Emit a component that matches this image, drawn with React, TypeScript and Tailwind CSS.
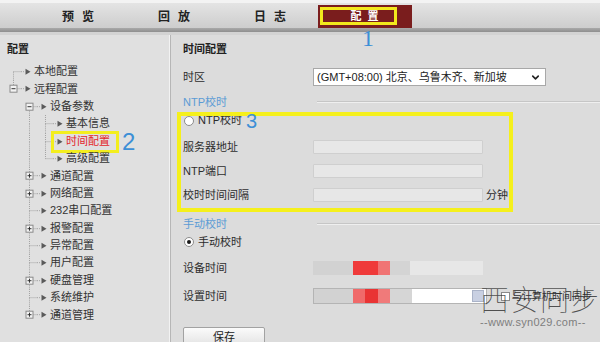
import React from "react";
import { ChevronDown } from "lucide-react";

type Kind =
  | "blank"
  | "pipe"
  | "tee"
  | "end"
  | "top"
  | "plus"
  | "plusEnd"
  | "minusTop"
  | "minusEnd";

interface TreeItem {
  label: string;
  cells: Kind[];
  active?: boolean;
}

const treeItems: TreeItem[] = [
  { label: "本地配置", cells: ["top"] },
  { label: "远程配置", cells: ["minusEnd"] },
  { label: "设备参数", cells: ["blank", "minusTop"] },
  { label: "基本信息", cells: ["blank", "pipe", "tee"] },
  { label: "时间配置", cells: ["blank", "pipe", "tee"], active: true },
  { label: "高级配置", cells: ["blank", "pipe", "end"] },
  { label: "通道配置", cells: ["blank", "plus"] },
  { label: "网络配置", cells: ["blank", "plus"] },
  { label: "232串口配置", cells: ["blank", "tee"] },
  { label: "报警配置", cells: ["blank", "plus"] },
  { label: "异常配置", cells: ["blank", "tee"] },
  { label: "用户配置", cells: ["blank", "tee"] },
  { label: "硬盘管理", cells: ["blank", "plus"] },
  { label: "系统维护", cells: ["blank", "tee"] },
  { label: "通道管理", cells: ["blank", "plusEnd"] },
];

const tabs = [
  { label: ["预", "览"] },
  { label: ["回", "放"] },
  { label: ["日", "志"] },
  { label: ["配", "置"], active: true },
];

// tree connector drawing for one indent level (16 x 17.4)
const TreeCell = ({ kind }: { kind: Kind }) => {
  const up = ["pipe", "tee", "end", "plus", "plusEnd", "minusEnd"].includes(kind);
  const down = ["pipe", "tee", "top", "plus", "minusTop"].includes(kind);
  const right = kind !== "blank" && kind !== "pipe";
  const box = ["plus", "plusEnd", "minusTop", "minusEnd"].includes(kind);
  const plus = kind === "plus" || kind === "plusEnd";
  return (
    <svg width="16" height="17.4" viewBox="0 0 16 17.4" className="shrink-0">
      <g stroke="#a3a3a3" strokeWidth="1" strokeDasharray="1 1">
        {up && <line x1="8.5" y1="0" x2="8.5" y2="8.7" />}
        {down && <line x1="8.5" y1="8.7" x2="8.5" y2="17.4" />}
        {right && <line x1="8.5" y1="8.7" x2="16" y2="8.7" />}
      </g>
      {box && (
        <g>
          <rect x="5" y="5.2" width="7" height="7" fill="#f3f3f3" stroke="#8a8a8a" strokeWidth="1" />
          <line x1="6.5" y1="8.7" x2="10.5" y2="8.7" stroke="#333" strokeWidth="1" />
          {plus && <line x1="8.5" y1="6.7" x2="8.5" y2="10.7" stroke="#333" strokeWidth="1" />}
        </g>
      )}
    </svg>
  );
};

const Arrow = () => (
  <svg width="13" height="17.4" viewBox="0 0 13 17.4" className="shrink-0">
    <line x1="0" y1="8.7" x2="4" y2="8.7" stroke="#a3a3a3" strokeDasharray="1 1" />
    <polygon points="4.5,5.7 9.5,8.7 4.5,11.7" fill="#5a5a5a" />
  </svg>
);

const Radio = ({ checked }: { checked?: boolean }) => (
  <span className="w-[10px] h-[10px] rounded-full border border-[#8c8c8c] bg-white flex items-center justify-center shrink-0">
    {checked && <span className="w-[4px] h-[4px] rounded-full bg-[#1a1a1a]" />}
  </span>
);

const SectionTitle = ({ title }: { title: string }) => (
  <div className="h-[22px] flex items-center">
    <span className="w-[130px] text-[11px] text-[#5b9bd5]">{title}</span>
    <span className="flex-1 ml-[4px] h-[2px] border-t border-[#c6c6c6] bg-[#efefef]" />
  </div>
);

const FieldRow = ({ label, children }: { label: string; children?: React.ReactNode }) => (
  <div className="h-[24px] flex items-center">
    <span className="w-[130px] text-[11px] text-[#2e2e2e]">{label}</span>
    {children}
  </div>
);

const GrayInput = () => (
  <span className="w-[170px] h-[14px] bg-[#e7e7e7] border border-[#cfcfcf] rounded-[1px]" />
);

export default function App() {
  return (
    <div className="w-[600px] h-[342px] overflow-hidden relative bg-[#dcdcdc] text-[#2b2b2b] font-['Liberation_Sans','Noto_Sans_CJK_SC',sans-serif]">
      {/* Top nav */}
      <div className="h-[3px] bg-[#f3f3f3]" />
      <div className="h-[25px] flex items-end pl-[30px] bg-gradient-to-b from-[#e4e4e4] to-[#cdcdcd]">
        {tabs.map((t) =>
          t.active ? (
            <div key="active" className="w-[94px] h-[23px] bg-[#7a1d1d] pl-[2px] pt-[2px]">
              <div className="w-[77px] h-[18px] border-[3px] border-[#f3e81c] flex items-center justify-center gap-[6px] pl-[12px] text-[11px] font-bold text-white">
                <span>{t.label[0]}</span>
                <span>{t.label[1]}</span>
              </div>
            </div>
          ) : (
            <div
              key={t.label.join("")}
              className="w-[96px] h-[23px] flex items-center justify-center gap-[8px] text-[12px] font-bold text-[#222]"
            >
              <span>{t.label[0]}</span>
              <span>{t.label[1]}</span>
            </div>
          )
        )}
      </div>
      <div className="h-[4px] bg-gradient-to-b from-[#a9a9a9] to-[#8f8f8f]" />
      <div className="h-[3px] bg-[#d3d3d3]" />

      <div className="flex h-[307px]">
        {/* Left tree */}
        <aside className="w-[170px] bg-[#e0e0e0] border-r border-[#f2f2f2]">
          <div className="h-[28px] flex items-center pl-[7px] text-[11px] font-bold text-[#222]">
            配置
          </div>
          <div className="pl-[5px]">
            {treeItems.map((item) => (
              <div key={item.label} className="relative h-[17.4px] flex items-center">
                {item.cells.map((c, i) => (
                  <TreeCell key={i} kind={c} />
                ))}
                <Arrow />
                <span
                  className={`text-[11px] leading-none whitespace-nowrap ${
                    item.active ? "text-[#e3262b]" : "text-[#333]"
                  }`}
                >
                  {item.label}
                </span>
                {item.active && (
                  <>
                    <span className="absolute left-[46px] top-[-2px] w-[68px] h-[22px] border-[3px] border-[#f3ee1e]" />
                    <span className="absolute left-[117px] top-[-3px] text-[24px] leading-none text-[#3d8fd6] font-['Liberation_Sans',sans-serif]">
                      2
                    </span>
                  </>
                )}
              </div>
            ))}
          </div>
        </aside>

        {/* Main */}
        <main className="flex-1 border-l border-[#b6b6b6] pl-[12px]">
          <div className="h-[28px] flex items-center text-[11px] font-bold text-[#222]">时间配置</div>

          <div className="h-[28px] flex items-center">
            <span className="w-[130px] text-[11px]">时区</span>
            <div className="w-[233px] h-[18px] bg-white border border-[#a8a8a8] flex items-center justify-between pl-[3px] pr-[4px]">
              <span className="text-[11px] text-[#222] whitespace-nowrap">(GMT+08:00) 北京、乌鲁木齐、新加坡</span>
              <ChevronDown size={11} strokeWidth={3.5} className="text-[#222]" />
            </div>
          </div>

          <SectionTitle title="NTP校时" />

          <div className="h-[15px] flex items-center pl-[1px] gap-[4px]">
            <Radio />
            <span className="text-[11px]">NTP校时</span>
          </div>

          <div className="mt-[7px]">
            <FieldRow label="服务器地址">
              <GrayInput />
            </FieldRow>
            <FieldRow label="NTP端口">
              <GrayInput />
            </FieldRow>
            <FieldRow label="校时时间间隔">
              <GrayInput />
              <span className="ml-[3px] text-[11px]">分钟</span>
            </FieldRow>
          </div>

          <div className="mt-[6px]">
            <SectionTitle title="手动校时" />
          </div>

          <div className="h-[14px] flex items-center pl-[1px] gap-[4px]">
            <Radio checked />
            <span className="text-[11px]">手动校时</span>
          </div>

          <div className="mt-[7px]">
            <FieldRow label="设备时间">
              <span className="w-[170px] h-[14px] bg-[#e7e7e7] flex blur-[0.6px]">
                <span className="w-[40px] bg-[#d2d2d2]" />
                <span className="w-[25px] bg-[#ef3a3a]" />
                <span className="w-[12px] bg-[#f07474]" />
                <span className="w-[20px] bg-[#d4d4d4]" />
              </span>
            </FieldRow>
          </div>

          <div className="mt-[4px]">
            <FieldRow label="设置时间">
              <span className="w-[174px] h-[16px] bg-white border border-[#b4b4b4] flex items-stretch">
                <span className="w-[39px] bg-[#d2d2d2] blur-[0.6px]" />
                <span className="w-[12px] bg-[#f06a6a] blur-[0.6px]" />
                <span className="w-[13px] bg-[#e93434] blur-[0.6px]" />
                <span className="w-[12px] bg-[#f07a7a] blur-[0.6px]" />
                <span className="w-[22px] bg-[#d6d6d6] blur-[0.6px]" />
                <span className="flex-1" />
                <span className="w-[12px] my-[1px] mr-[2px] bg-[#c9d0e2] border border-[#aab3c8]" />
              </span>
              <span className="ml-[14px] w-[9px] h-[9px] bg-white border border-[#8a8a8a]" />
              <span className="ml-[2px] text-[10px] whitespace-nowrap text-[#333]">与计算机时间同步</span>
            </FieldRow>
          </div>

          <button
            type="button"
            className="mt-[19px] w-[82px] h-[20px] rounded-[2px] border border-[#a2a2a2] bg-gradient-to-b from-[#fbfbfb] to-[#e2e2e2] text-[11px] text-[#222]"
          >
            保存
          </button>
        </main>
      </div>

      {/* annotations */}
      <span className="absolute left-[362px] top-[26px] text-[24px] leading-none text-[#3d8fd6] font-['Liberation_Serif',serif]">
        1
      </span>
      <span className="absolute left-[177px] top-[112px] w-[336px] h-[100px] border-[4px] border-[#f5f01c]" />
      <span className="absolute left-[246px] top-[111px] text-[20px] leading-none text-[#3d8fd6] font-['Liberation_Sans',sans-serif]">
        3
      </span>

      {/* watermark */}
      <div className="absolute left-[480px] top-[284px] flex flex-col items-start">
        <span className="text-[29px] leading-none tracking-[1px] font-thin text-[#2a2a2a]/80 font-['Noto_Sans_CJK_SC',sans-serif]">
          西安同步
        </span>
        <span className="mt-[4px] text-[11px] leading-none tracking-[0.3px] text-[#7e7e7e] font-['Liberation_Sans',sans-serif]">
          --www.syn029.com--
        </span>
      </div>
    </div>
  );
}
